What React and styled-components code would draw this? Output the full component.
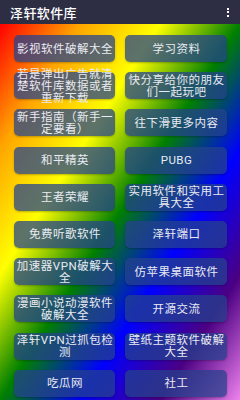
import React from 'react';
import styled, { createGlobalStyle } from 'styled-components';

const GlobalStyle = createGlobalStyle`
  html, body {
    margin: 0;
    padding: 0;
    height: 100%;
  }

  body {
    font-family: Roboto, "Noto Sans CJK SC", sans-serif;
    background: #2d2e44;
  }
`;

const Screen = styled.div`
  display: flex;
  flex-direction: column;
  width: 240px;
  height: 400px;
  overflow: hidden;
`;

const Toolbar = styled.header`
  display: flex;
  align-items: center;
  justify-content: space-between;
  height: 24px;
  padding: 0 10px;
  background: #2d2e44;
  flex-shrink: 0;
`;

const Title = styled.h1`
  margin: 0;
  font-size: 13px;
  font-weight: 500;
  color: #ffffff;
  letter-spacing: 0.4px;
`;

const MenuDots = styled.span`
  display: flex;
  flex-direction: column;
  gap: 1.5px;
  margin-right: 1px;

  & i {
    display: block;
    width: 2px;
    height: 2px;
    background: #ffffff;
  }
`;

const Content = styled.main`
  flex: 1;
  display: grid;
  grid-template-columns: 101px 102px;
  grid-auto-rows: 27px;
  column-gap: 10px;
  row-gap: 10.2px;
  padding: 11px 13px 0 14px;
  background: linear-gradient(
    to bottom right,
    red,
    orange,
    yellow,
    green,
    blue,
    indigo,
    violet
  );
`;

const Tile = styled.button`
  display: flex;
  align-items: center;
  justify-content: center;
  padding: 0 0 0 1px;
  border: none;
  border-radius: 5px;
  background: rgba(36, 66, 140, 0.74);
  box-shadow: 0 1px 2px rgba(0, 0, 0, 0.25);
  color: #e9ebf2;
  font-family: Roboto, "Noto Sans CJK SC", sans-serif;
  font-size: 11.5px;
  letter-spacing: 0.5px;
  line-height: 12px;
  text-align: center;
  overflow: visible;
  cursor: pointer;
`;

const items = [
  '影视软件破解大全',
  '学习资料',
  '若是弹出广告就清楚软件库数据或者重新下载',
  '快分享给你的朋友们一起玩吧',
  '新手指南（新手一定要看）',
  '往下滑更多内容',
  '和平精英',
  'PUBG',
  '王者荣耀',
  '实用软件和实用工具大全',
  '免费听歌软件',
  '泽轩端口',
  '加速器VPN破解大全',
  '仿苹果桌面软件',
  '漫画小说动漫软件破解大全',
  '开源交流',
  '泽轩VPN过抓包检测',
  '壁纸主题软件破解大全',
  '吃瓜网',
  '社工',
];

function App() {
  return (
    <Screen>
      <GlobalStyle />
      <Toolbar>
        <Title>泽轩软件库</Title>
        <MenuDots>
          <i />
          <i />
          <i />
        </MenuDots>
      </Toolbar>
      <Content>
        {items.map((label) => (
          <Tile key={label}>{label}</Tile>
        ))}
      </Content>
    </Screen>
  );
}

export default App;
